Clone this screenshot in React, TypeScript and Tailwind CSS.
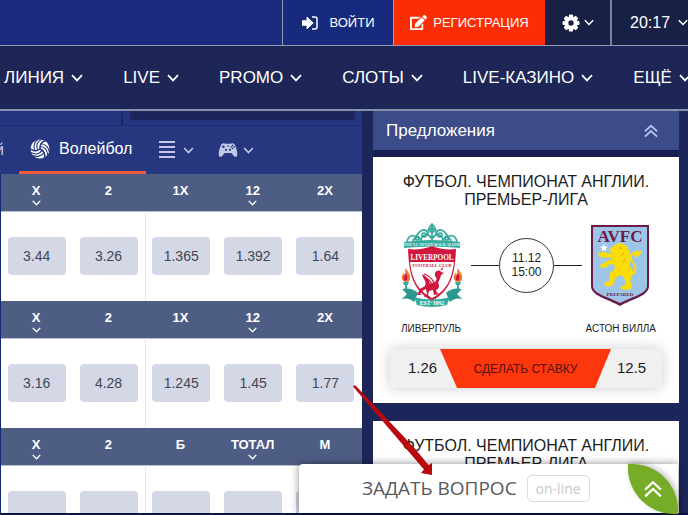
import React from "react";
import { FaEdit } from "react-icons/fa";

function Chevron({ className = "" }: { className?: string }) {
  return (
    <svg viewBox="0 0 12 8" fill="none" stroke="currentColor" strokeWidth="1.8" className={`shrink-0 ${className}`} aria-hidden="true">
      <path d="M1 1.2 6 6.4 11 1.2" />
    </svg>
  );
}

function DoubleUp({ className = "" }: { className?: string }) {
  return (
    <svg viewBox="0 0 16 16" fill="none" stroke="currentColor" strokeWidth="2" className={`shrink-0 ${className}`} aria-hidden="true">
      <path d="M1 8.5 8 2l7 6.5M1 14.5 8 8l7 6.5" />
    </svg>
  );
}

function SignInIcon() {
  return (
    <svg viewBox="0 0 16 14" className="h-[14px] w-4 shrink-0" aria-hidden="true">
      <path d="M0 4.800h5V1.200L11.200 7 5 12.800V9.200H0z" fill="currentColor" stroke="currentColor" strokeLinejoin="round" />
      <path d="M10 1h3a2 2 0 0 1 2 2v8a2 2 0 0 1-2 2h-3" fill="none" stroke="currentColor" strokeWidth="1.5" />
    </svg>
  );
}

function GearIcon() {
  return (
    <svg viewBox="0 0 18 18" className="size-[18px] shrink-0" aria-hidden="true">
      {[0, 45, 90, 135].map((a) => (
        <rect key={a} x="6.900" y="0.500" width="4.200" height="17" rx="1" fill="currentColor" transform={`rotate(${a} 9 9)`} />
      ))}
      <circle cx="9" cy="9" r="6.600" fill="currentColor" />
      <circle cx="9" cy="9" r="2.700" fill="#182046" />
    </svg>
  );
}

function VolleyballIcon() {
  return (
    <svg viewBox="0 0 20 20" className="size-5 shrink-0" aria-hidden="true">
      <circle cx="10" cy="10" r="9.500" fill="currentColor" />
      {[0, 120, 240].map((a) => (
        <g key={a} transform={`rotate(${a} 10 10)`} fill="none" stroke="#27377f">
          <path d="M10 10C9.500 6 11.500 3 15.500 1.500" strokeWidth="1.500" />
          <path d="M7.600 10.800C5.800 6.600 8 2.600 11.500.3M5.200 12.200C2.600 7.600 4.600 3 7.800.6" strokeWidth="1.100" />
        </g>
      ))}
    </svg>
  );
}

function GamepadIcon() {
  return (
    <svg viewBox="0 0 20 16" className="h-4 w-5 shrink-0" aria-hidden="true">
      <path d="M3.500 2.300C4.500 1 6.400.8 7.500 1.800h5c1.100-1 3-.8 4 .5 1.400 2.600 2.600 6.200 2.800 9.700.1 3-1.900 3.600-3.400 1.900L13.200 11H6.800l-2.700 2.900C2.600 15.600.6 15 .7 12c.2-3.500 1.400-7.100 2.800-9.700z" fill="currentColor" />
      <g fill="#27377f">
        <circle cx="5.400" cy="4.800" r="1.300" />
        <circle cx="8" cy="7.800" r="1.100" />
        <circle cx="12" cy="7.800" r="1.100" />
        <circle cx="14.600" cy="3.400" r=".8" />
        <circle cx="14.600" cy="6.400" r=".8" />
        <circle cx="13.100" cy="4.900" r=".8" />
        <circle cx="16.100" cy="4.900" r=".8" />
        <circle cx="10" cy="4" r=".8" />
      </g>
    </svg>
  );
}

function TopBar() {
  return (
    <div className="flex h-[46px] justify-end border-b border-[#8e9ab0] bg-[#1a2a7d] pb-[2px] text-white">
      <button className="-mb-[2px] flex w-[111px] items-center justify-center gap-3 border-l border-[#8e9ab0] bg-[#182a7d] text-[13px]">
        <SignInIcon />
        ВОЙТИ
      </button>
      <button className="-mb-[2px] flex w-[152px] items-center justify-center gap-[6px] border-l border-[#c98f8f] bg-[#fb2d05] text-[13px]">
        <FaEdit className="size-[17px]" />
        РЕГИСТРАЦИЯ
      </button>
      <button aria-label="Настройки" className="-mb-[2px] flex w-[65px] items-center justify-center gap-1 bg-[#182046]">
        <GearIcon />
        <Chevron className="h-[7px] w-[10px]" />
      </button>
      <button className="-mb-[2px] flex w-[78px] items-center gap-2 overflow-hidden border-l-2 border-[#7a859d] bg-[#182046] pl-[18px] text-[16px]">
        20:17
        <Chevron className="h-[7px] w-[10px]" />
      </button>
    </div>
  );
}

const navItems = ["ЛИНИЯ", "LIVE", "PROMO", "СЛОТЫ", "LIVE-КАЗИНО", "ЕЩЁ"];

function Nav() {
  return (
    <nav className="flex h-[65px] items-center gap-10 overflow-hidden border-b-2 border-[#8490ac] bg-[#1d2656] pl-1 text-[17px] text-white">
      {navItems.map((item) => (
        <a key={item} href="#" className="flex shrink-0 items-center gap-[7px]">
          {item}
          <Chevron className="h-2 w-3" />
        </a>
      ))}
    </nav>
  );
}

function SportTabs() {
  return (
    <div className="flex h-[49px] overflow-hidden border-t border-[#1d2b6c] bg-[#27377f] text-[#c3c9e6]">
      <a href="#" className="flex w-[19px] items-center text-[16px]">
        <span className="flex w-1 justify-end overflow-hidden">й</span>
      </a>
      <a href="#" className="flex h-12 w-[127px] items-center gap-[9px] border-b-[3px] border-[#ee5a3c] pl-[11px] text-[16px] text-white">
        <VolleyballIcon />
        Волейбол
      </a>
      <button aria-label="Список" className="ml-[13px] flex items-center gap-2">
        <svg viewBox="0 0 16 18" className="h-[18px] w-4" fill="currentColor" aria-hidden="true">
          <path d="M0 0h16v2H0zM0 5h16v2H0zM0 10h16v2H0zM0 15h16v2H0z" />
        </svg>
        <Chevron className="h-[7px] w-[11px]" />
      </button>
      <button aria-label="Киберспорт" className="ml-6 flex items-center gap-[5px]">
        <GamepadIcon />
        <Chevron className="h-[7px] w-[11px]" />
      </button>
    </div>
  );
}

type Market = { heads: string[]; odds: string[] };

const markets: Market[] = [
  { heads: ["X", "2", "1X", "12", "2X"], odds: ["3.44", "3.26", "1.365", "1.392", "1.64"] },
  { heads: ["X", "2", "1X", "12", "2X"], odds: ["3.16", "4.28", "1.245", "1.45", "1.77"] },
  { heads: ["X", "2", "Б", "ТОТАЛ", "М"], odds: ["", "", "", "", ""] },
];

function OddsTable() {
  return (
    <div className="border-l border-[#14287a] bg-[#4e5d84]">
      <table className="w-full table-fixed bg-white text-center">
        {markets.map((m, i) => (
          <tbody key={i}>
            <tr className="h-[37px] border-b border-[#b6bdd6] bg-[#4e5d84] text-[13px] text-white">
              {m.heads.map((h, c) => (
                <th key={c} scope="col" className="p-0 align-top font-bold">
                  <div className="flex flex-col items-center pt-2 pr-[2px]">
                    <span className="leading-[18px]">{h}</span>
                    {(c === 0 || c === 3) && <Chevron className="h-[6px] w-[9px]" />}
                  </div>
                </th>
              ))}
            </tr>
            <tr className="h-[90px]">
              {m.odds.map((o, c) => (
                <td key={c} className={c === 1 ? "border-r border-[#e6e6ea] p-0 pr-px" : "p-0 pr-px"}>
                  <button aria-label={o ? undefined : "Коэффициент"} className="h-[38px] w-[58px] rounded-[4px] bg-[#d3d7e6] align-middle text-[14px] text-[#444750]">
                    {o}
                  </button>
                </td>
              ))}
            </tr>
          </tbody>
        ))}
      </table>
    </div>
  );
}

function LiverpoolCrest() {
  return (
    <svg viewBox="0 0 62 84" className="h-[84px] w-[62px]" role="img" aria-label="Ливерпуль">
      <g fill="none" stroke="#37aaa0" strokeWidth="1.7">
        <path d="M6 19c1-6 5-8 9-5 4-8 9-9 12-4 0-5 2-7 4-9 2 2 4 4 4 9 3-5 8-4 12 4 4-3 8-1 9 5" />
        <path d="M12 19c0-5 6-6 8-2 1-6 8-7 11-1 3-6 10-5 11 1 2-4 8-3 8 2M25 11c3 0 4 3 6 5 2-2 3-5 6-5M31 1v15" />
        <circle cx="16" cy="15" r="2" /><circle cx="46" cy="15" r="2" /><circle cx="31" cy="7" r="2" />
        <circle cx="23" cy="12" r="2" /><circle cx="39" cy="12" r="2" />
      </g>
      <path d="M3 19q28-4 56 0v6q-28-3-56 0z" fill="#37aaa0" />
      <text x="31" y="23.200" textAnchor="middle" fontSize="3.900" className="font-['Liberation_Serif',serif] font-bold" fill="#e5f7f4">YOU'LL NEVER WALK ALONE</text>
      <path d="M7 26c8 1 17 0 24-3 7 3 16 4 24 3-1 19-2 40-24 52C9 66 8 45 7 26z" fill="#d2163e" />
      <path d="M9 39h44c-2 15-6 28-22 36C15 67 11 54 9 39z" fill="#fff" />
      <text x="31" y="37" textAnchor="middle" fontSize="7.200" className="font-['Liberation_Serif',serif] font-bold" fill="#fff">LIVERPOOL</text>
      <text x="31" y="44" textAnchor="middle" fontSize="4.600" className="font-['Liberation_Serif',serif] font-bold" fill="#d2163e">FOOTBALL CLUB</text>
      <path d="M34 50c2-3 5-3 6-1l3 1-3 2c-1 4-2 6-3 8 2 3 1 6-2 7l1 3 3 1-6 1-1-5-4 1-1 4 2 2h-6l3-3-1-5-4 2-2 3 2 1h-5l3-6 5-3c2-5-2-7-3-12 4 2 7 5 8 10l5-2c2-2 2-4 0-6z" fill="#d2163e" />
      <path d="M23 51c4 1 9 5 10 9M22 54c4 1 8 4 9 8M40 47l2-2" stroke="#d2163e" strokeWidth="1.2" fill="none" />
      {[5, 57].map((x) => (
        <g key={x} transform={`translate(${x} 45)`}>
          <path d="M-1 0C2 3 5 7 4 11c0 4-7 4-8 0-1-3 1-4 2-7 0 2 1 3 1 3 1-2 0-4 0-7z" fill="#ed7a2e" />
          <path d="M0 5c2 4 2 7-1 8-3-3 0-5 1-8z" fill="#d2163e" />
          <path d="M-3 14h6l-1 3h-4zM-1 17h2v5h-2z" fill="#37aaa0" />
        </g>
      ))}
      <path d="M1 66q10-2 16 4l-4 9q-5-5-12-3l5-5zM61 66q-10-2-16 4l4 9q5-5 12-3l-5-5z" fill="#2b978e" />
      <path d="M13 74q18 5 36 0l-3 8q-15 4-30 0z" fill="#37aaa0" />
      <text x="31" y="82" textAnchor="middle" fontSize="5.800" className="font-['Liberation_Serif',serif] font-bold" fill="#fff">EST·1892</text>
    </svg>
  );
}

function VillaCrest() {
  return (
    <svg viewBox="0 0 60 83" className="h-[83px] w-[60px]" role="img" aria-label="Астон Вилла">
      <path d="M1 1h58v61c0 10-17 13-29 20C18 75 1 72 1 62z" fill="#6d1b46" />
      <path d="M3 3h54v59c0 8-16 11-27 17C19 73 3 70 3 62z" fill="#9dc5e8" />
      <text x="30" y="17.500" textAnchor="middle" fontSize="17" className="font-['Liberation_Serif',serif] font-bold" fill="#6d1b46">AVFC</text>
      <path d="m14 20 1.1 2.6 2.9.2-2.2 1.8.7 2.8-2.5-1.5-2.5 1.5.7-2.8-2.200-1.8 2.9-.2z" fill="#fff" />
      <path d="M24 22c2-3 8-4 11-1 3 2 4 6 5 9 2 5 0 9-1 12 4 2 5 6 3 10l-2 5 2 3-1 5-7 1-4-2 2-2 4-1-1-5-3-5-7 3-1 6-5 3-5-2 1-3 4-1 1-8 5-4-1-5-6 1-3 3-5-1 1-3 3-1 5-3 4-1-5-2-5 1-4-2-1-4 3 1 2-1 5 1 5 1-2-2-2-1 2-3z" fill="#fbdc05" />
      <path d="M39 50c9 1 7-8 3-13-3-5 0-9 6-9" fill="none" stroke="#fbdc05" strokeWidth="2" />
      <path d="m44 30 2-3h6l-2 4-5 3z" fill="#fbdc05" />
      <path d="M29 24h3M34 29l-3 3M35 35l-2 4" stroke="#b99a12" strokeWidth=".8" />
      <text x="30" y="72" textAnchor="middle" fontSize="5" className="font-['Liberation_Serif',serif] font-bold" fill="#6d1b46">PREPARED</text>
    </svg>
  );
}

function OfferCard() {
  return (
    <article className="flex h-[246px] flex-col bg-white pt-4 text-[#1c1c1c]">
      <h3 className="mx-auto w-[264px] text-center text-[16px] leading-[18px]">ФУТБОЛ. ЧЕМПИОНАТ АНГЛИИ. ПРЕМЬЕР-ЛИГА</h3>
      <div className="mt-[14px] flex items-center justify-between pr-[29px] pl-7">
        <LiverpoolCrest />
        <div className="flex items-center">
          <span className="h-px w-7 bg-[#222]" />
          <time className="flex size-[55px] items-center justify-center rounded-full border border-[#333] text-center text-[12px] leading-[14px]">
            11.12
            <br />
            15:00
          </time>
          <span className="h-px w-7 bg-[#222]" />
        </div>
        <VillaCrest />
      </div>
      <div className="mt-4 flex justify-between pr-[23px] pl-7 text-[10px] leading-[12px]">
        <span>ЛИВЕРПУЛЬ</span>
        <span>АСТОН ВИЛЛА</span>
      </div>
      <div className="mx-[17px] mt-[14px] flex h-[39px] items-center rounded-[2px] bg-[#f0f0f1] text-[15px] shadow-[0_0_14px_rgba(0,0,0,0.2)]">
        <span className="w-[50px] pl-[18px]">1.26</span>
        <button className="h-[39px] flex-1 bg-[#fc370d] text-[12px] text-[#571010] [clip-path:polygon(0_0,100%_0,90.6%_100%,10%_100%)]">СДЕЛАТЬ СТАВКУ</button>
        <span className="w-[51px] pl-[6px]">12.5</span>
      </div>
    </article>
  );
}

function AskWidget() {
  return (
    <div className="absolute right-[10px] bottom-[2px] flex h-[49px] w-[379px] items-center rounded-tl-[4px] bg-white pl-[63px] shadow-[0_0_8px_rgba(0,0,0,0.45)]">
      <a href="#" className="flex items-center gap-[10px] font-['Open_Sans','Noto_Sans',sans-serif] whitespace-nowrap">
        <span className="text-[19px] text-[#57595c]">ЗАДАТЬ ВОПРОС</span>
        <span className="flex h-[27px] w-[63px] items-center justify-center rounded-[5px] border border-[#dcdcdc] text-[14px] text-[#c9c9c9]">on-line</span>
      </a>
      <button aria-label="Наверх" className="ml-auto flex size-[50px] items-center justify-center rounded-tr-[46px] rounded-bl-[46px] bg-[#76ac28] text-white shadow-[2px_-1px_6px_rgba(0,0,0,0.25)]">
        <DoubleUp className="size-[18px]" />
      </button>
    </div>
  );
}

export default function App() {
  return (
    <div className="relative flex h-screen flex-col overflow-hidden bg-[#1c265b] font-['Liberation_Sans',Arial,sans-serif]">
      <TopBar />
      <Nav />
      <main className="grid min-h-0 flex-1 grid-cols-[362fr_306fr] gap-x-[11px] overflow-hidden border-b-2 border-[#0c1440] pr-[9px]">
        <section>
          <div className="flex h-[14px] bg-[#24367f] pr-[7px]">
            <div className="w-[123px] border-r-2 border-[#1b2860]" />
            <div className="ml-[7px] h-[9px] flex-1 rounded-b-[3px] bg-[#1c265b]" />
          </div>
          <SportTabs />
          <OddsTable />
        </section>
        <aside>
          <h2 className="flex h-[39px] items-center justify-between bg-[#3c4b89] pr-[21px] pl-[13px] text-[17px] text-white">
            Предложения
            <DoubleUp className="size-[14px] text-[#b8c3ee]" />
          </h2>
          <div className="flex flex-col gap-[18px] border-t-[7px] border-[#171f52]">
            <OfferCard />
            <OfferCard />
          </div>
        </aside>
      </main>
      <AskWidget />
      <svg viewBox="0 0 80 92" className="pointer-events-none absolute top-[385px] left-[353px] h-[92px] w-20" aria-hidden="true">
        <path d="M0 1.500 2 0 61 62.500 75.500 80l3.500-2v12l-11-2 3-3.500L56 67z" fill="#b80a0d" />
      </svg>
    </div>
  );
}
